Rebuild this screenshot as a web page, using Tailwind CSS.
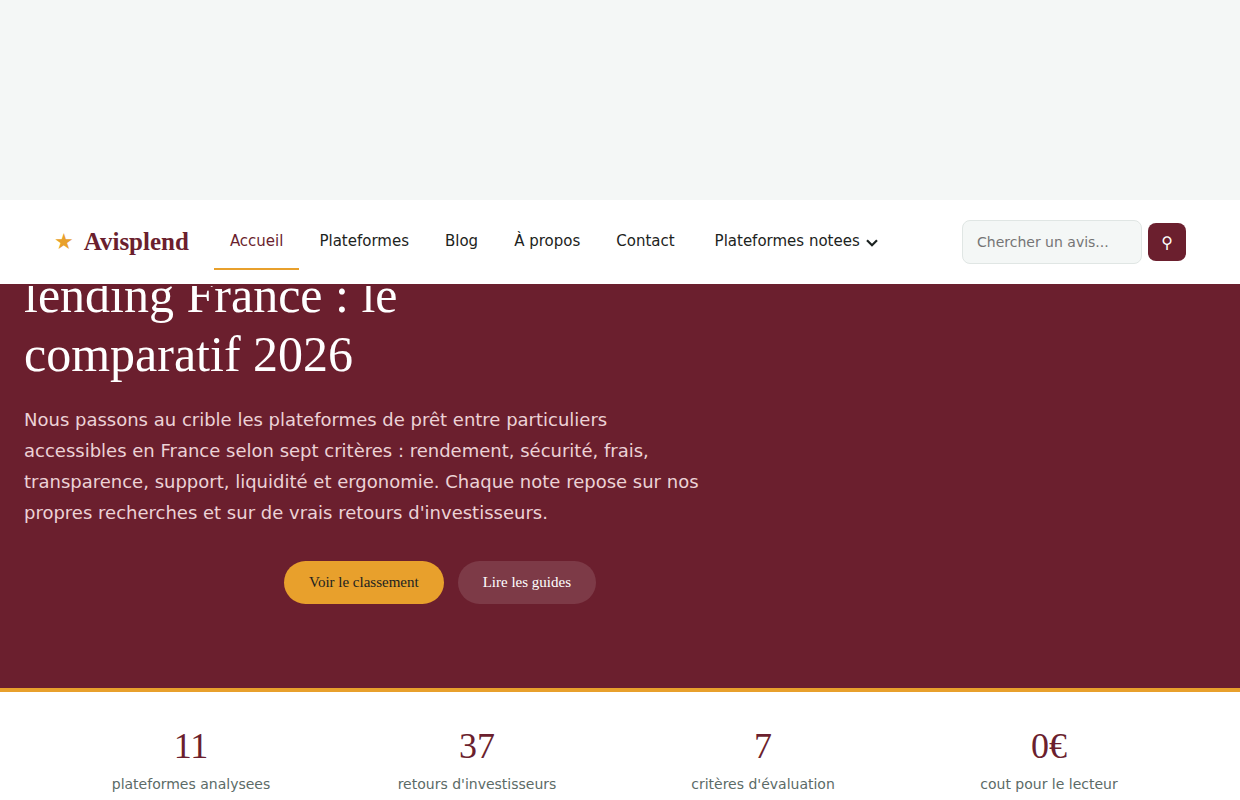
<!DOCTYPE html>
<html lang="fr">
<head>
<meta charset="utf-8">
<meta name="viewport" content="width=device-width, initial-scale=1">
<title>Avisplend</title>
<script src="https://cdn.jsdelivr.net/npm/@tailwindcss/browser@4"></script>
</head>
<body class="bg-[#f4f7f6] pt-[200px] font-['DejaVu_Sans',sans-serif] text-[#1c2321]">
<header class="sticky top-0 z-10 border-b-2 border-[#6b1f2e] bg-white">
  <div class="mx-auto flex h-[84px] max-w-[1180px] items-center px-6">
    <a href="#" class="mr-[25px] flex items-center gap-2.5 font-['Liberation_Serif',serif] text-[25px] font-bold text-[#6b1f2e]"><span class="font-['DejaVu_Sans',sans-serif] text-[22px] leading-7 font-normal text-[#e8a02c]">★</span>Avisplend</a>
    <nav class="flex items-center gap-1 text-[15px] leading-[26px]">
      <a href="#" class="border-b-2 border-[#e8a02c] px-4 py-3.5 text-[#6b1f2e]">Accueil</a>
      <a href="#" class="border-b-2 border-transparent px-4 py-3.5">Plateformes</a>
      <a href="#" class="border-b-2 border-transparent px-4 py-3.5">Blog</a>
      <a href="#" class="border-b-2 border-transparent px-4 py-3.5">À propos</a>
      <a href="#" class="border-b-2 border-transparent px-4 py-3.5">Contact</a>
      <button type="button" class="ml-1 flex items-center gap-1.5 border-b-2 border-transparent px-4 py-3.5">Plateformes notees
        <svg class="mt-1 h-2 w-3" viewBox="0 0 12 8" fill="none" stroke="currentColor" stroke-width="2.2" aria-hidden="true"><path d="M1 1.2 6 6.2 11 1.2"/></svg>
      </button>
    </nav>
    <form class="ml-auto flex items-center gap-1.5">
      <input type="search" aria-label="Chercher un avis" placeholder="Chercher un avis..." class="h-11 w-[180px] rounded-lg border border-[#e0e6e4] bg-[#f4f7f6] px-3.5 text-sm placeholder:text-[#757575]">
      <button type="submit" aria-label="Rechercher" class="flex size-[38px] items-center justify-center rounded-lg bg-[#6b1f2e] pt-0.5 text-base text-white">⚲</button>
    </form>
  </div>
</header>
<main>
  <section class="border-b-4 border-[#e8a02c] bg-[#6b1f2e] pb-[84px] text-white">
    <div class="max-w-[880px] px-6">
      <h1 class="-mt-5 mb-5 max-w-[460px] font-['Liberation_Serif',serif] text-[50px] leading-[59px]">lending France : le comparatif 2026</h1>
      <p class="mb-[33px] max-w-[680px] text-lg leading-[31px] text-[#ecd2d6]">Nous passons au crible les plateformes de prêt entre particuliers accessibles en France selon sept critères : rendement, sécurité, frais, transparence, support, liquidité et ergonomie. Chaque note repose sur nos propres recherches et sur de vrais retours d'investisseurs.</p>
      <div class="flex justify-center gap-3.5 font-['Liberation_Serif',serif] text-[15px] leading-[19px]">
        <a href="#" class="rounded-full bg-[#e8a02c] px-[25px] py-3 text-[#1c2321]">Voir le classement</a>
        <a href="#" class="rounded-full bg-white/12 px-[25px] py-3">Lire les guides</a>
      </div>
    </div>
  </section>
  <section class="bg-white py-8">
    <div class="mx-auto grid max-w-[1120px] grid-cols-4 gap-6 text-center">
      <div><div class="font-['Liberation_Serif',serif] text-4xl leading-[44px] text-[#6b1f2e]">11</div><div class="mt-1 text-sm leading-6 text-[#5c6b67]">plateformes analysees</div></div>
      <div><div class="font-['Liberation_Serif',serif] text-4xl leading-[44px] text-[#6b1f2e]">37</div><div class="mt-1 text-sm leading-6 text-[#5c6b67]">retours d'investisseurs</div></div>
      <div><div class="font-['Liberation_Serif',serif] text-4xl leading-[44px] text-[#6b1f2e]">7</div><div class="mt-1 text-sm leading-6 text-[#5c6b67]">critères d'évaluation</div></div>
      <div><div class="font-['Liberation_Serif',serif] text-4xl leading-[44px] text-[#6b1f2e]">0€</div><div class="mt-1 text-sm leading-6 text-[#5c6b67]">cout pour le lecteur</div></div>
    </div>
  </section>
</main>
</body>
</html>
